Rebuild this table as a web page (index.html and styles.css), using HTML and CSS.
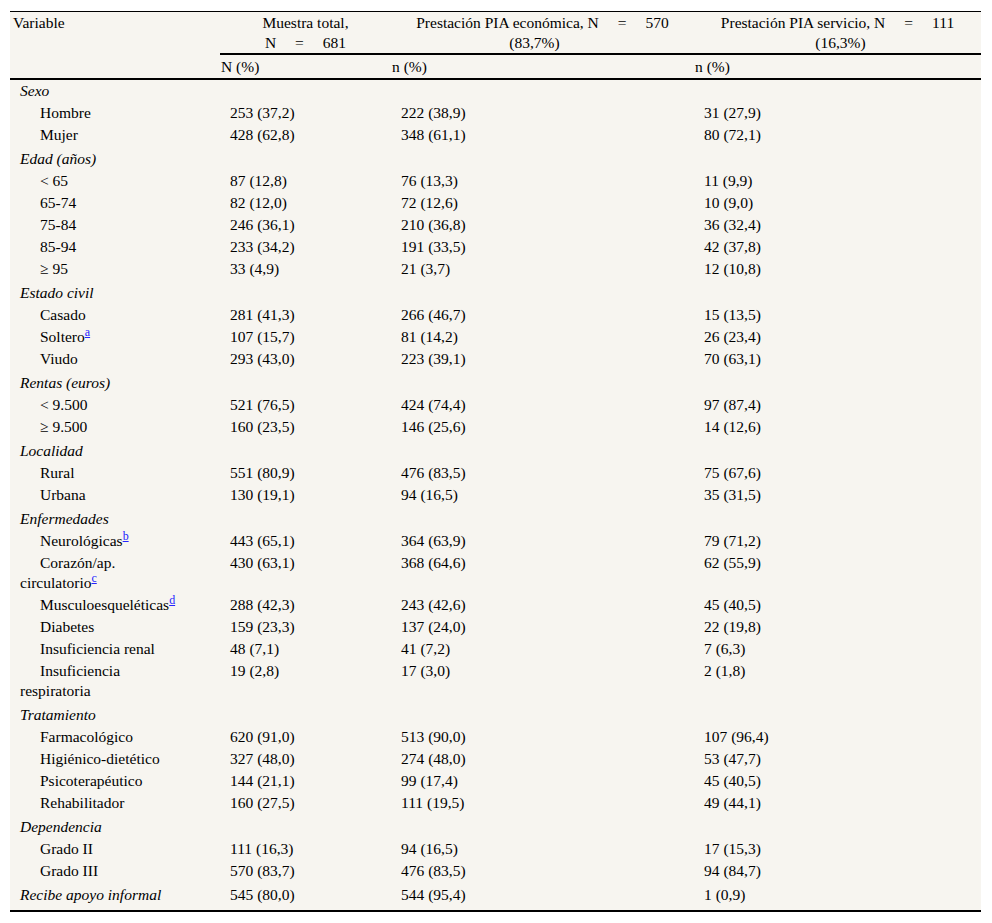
FILE: index.html
```html
<!DOCTYPE html>
<html lang="es">
<head>
<meta charset="utf-8">
<title>Tabla</title>
<link rel="stylesheet" href="styles.css">
</head>
<body>
<table class="tbl">
  <colgroup>
    <col class="c1"><col class="c2"><col class="c3"><col class="c4">
  </colgroup>
  <thead>
    <tr class="h1">
      <th rowspan="2" class="var">Variable</th>
      <th class="grp">Muestra total,<br>N<span class="eq">=</span>681</th>
      <th class="grp">Prestación PIA económica, N<span class="eq">=</span>570<br><span class="l2a">(83,7%)</span></th>
      <th class="grp">Prestación PIA servicio, N<span class="eq">=</span>111<br><span class="l2b">(16,3%)</span></th>
    </tr>
    <tr class="h2">
      <th>N (%)</th>
      <th>n (%)</th>
      <th>n (%)</th>
    </tr>
  </thead>
  <tbody>
    <tr class="cat first"><td>Sexo</td><td></td><td></td><td></td></tr>
    <tr><td class="it">Hombre</td><td>253 (37,2)</td><td>222 (38,9)</td><td>31 (27,9)</td></tr>
    <tr><td class="it">Mujer</td><td>428 (62,8)</td><td>348 (61,1)</td><td>80 (72,1)</td></tr>
    <tr class="cat"><td>Edad (años)</td><td></td><td></td><td></td></tr>
    <tr><td class="it">&lt; 65</td><td>87 (12,8)</td><td>76 (13,3)</td><td>11 (9,9)</td></tr>
    <tr><td class="it">65-74</td><td>82 (12,0)</td><td>72 (12,6)</td><td>10 (9,0)</td></tr>
    <tr><td class="it">75-84</td><td>246 (36,1)</td><td>210 (36,8)</td><td>36 (32,4)</td></tr>
    <tr><td class="it">85-94</td><td>233 (34,2)</td><td>191 (33,5)</td><td>42 (37,8)</td></tr>
    <tr><td class="it">≥ 95</td><td>33 (4,9)</td><td>21 (3,7)</td><td>12 (10,8)</td></tr>
    <tr class="cat"><td>Estado civil</td><td></td><td></td><td></td></tr>
    <tr><td class="it">Casado</td><td>281 (41,3)</td><td>266 (46,7)</td><td>15 (13,5)</td></tr>
    <tr><td class="it">Soltero<sup><a href="#a">a</a></sup></td><td>107 (15,7)</td><td>81 (14,2)</td><td>26 (23,4)</td></tr>
    <tr><td class="it">Viudo</td><td>293 (43,0)</td><td>223 (39,1)</td><td>70 (63,1)</td></tr>
    <tr class="cat"><td>Rentas (euros)</td><td></td><td></td><td></td></tr>
    <tr><td class="it">&lt; 9.500</td><td>521 (76,5)</td><td>424 (74,4)</td><td>97 (87,4)</td></tr>
    <tr><td class="it">≥ 9.500</td><td>160 (23,5)</td><td>146 (25,6)</td><td>14 (12,6)</td></tr>
    <tr class="cat"><td>Localidad</td><td></td><td></td><td></td></tr>
    <tr><td class="it">Rural</td><td>551 (80,9)</td><td>476 (83,5)</td><td>75 (67,6)</td></tr>
    <tr><td class="it">Urbana</td><td>130 (19,1)</td><td>94 (16,5)</td><td>35 (31,5)</td></tr>
    <tr class="cat"><td>Enfermedades</td><td></td><td></td><td></td></tr>
    <tr><td class="it">Neurológicas<sup><a href="#b">b</a></sup></td><td>443 (65,1)</td><td>364 (63,9)</td><td>79 (71,2)</td></tr>
    <tr><td class="it">Corazón/ap.<br>circulatorio<sup><a href="#c">c</a></sup></td><td>430 (63,1)</td><td>368 (64,6)</td><td>62 (55,9)</td></tr>
    <tr><td class="it">Musculoesqueléticas<sup><a href="#d">d</a></sup></td><td>288 (42,3)</td><td>243 (42,6)</td><td>45 (40,5)</td></tr>
    <tr><td class="it">Diabetes</td><td>159 (23,3)</td><td>137 (24,0)</td><td>22 (19,8)</td></tr>
    <tr><td class="it">Insuficiencia renal</td><td>48 (7,1)</td><td>41 (7,2)</td><td>7 (6,3)</td></tr>
    <tr><td class="it">Insuficiencia<br>respiratoria</td><td>19 (2,8)</td><td>17 (3,0)</td><td>2 (1,8)</td></tr>
    <tr class="cat"><td>Tratamiento</td><td></td><td></td><td></td></tr>
    <tr><td class="it">Farmacológico</td><td>620 (91,0)</td><td>513 (90,0)</td><td>107 (96,4)</td></tr>
    <tr><td class="it">Higiénico-dietético</td><td>327 (48,0)</td><td>274 (48,0)</td><td>53 (47,7)</td></tr>
    <tr><td class="it">Psicoterapéutico</td><td>144 (21,1)</td><td>99 (17,4)</td><td>45 (40,5)</td></tr>
    <tr><td class="it">Rehabilitador</td><td>160 (27,5)</td><td>111 (19,5)</td><td>49 (44,1)</td></tr>
    <tr class="cat"><td>Dependencia</td><td></td><td></td><td></td></tr>
    <tr><td class="it">Grado II</td><td>111 (16,3)</td><td>94 (16,5)</td><td>17 (15,3)</td></tr>
    <tr><td class="it">Grado III</td><td>570 (83,7)</td><td>476 (83,5)</td><td>94 (84,7)</td></tr>
    <tr class="cat last"><td>Recibe apoyo informal</td><td>545 (80,0)</td><td>544 (95,4)</td><td>1 (0,9)</td></tr>
  </tbody>
</table>
</body>
</html>
```

FILE: styles.css
```css
html, body {
  margin: 0;
  padding: 0;
  background: #ffffff;
}

.tbl {
  margin: 11px 0 0 10px;
  width: 971px;
  table-layout: fixed;
  border-collapse: separate;
  border-spacing: 0;
  background: #f7f5f0;
  border-top: 1px solid #000;
  font-family: "Liberation Serif", "Times New Roman", serif;
  font-size: 15.5px;
  line-height: 20px;
  color: #000;
}

.c1 { width: 210px; }
.c2 { width: 171px; }
.c3 { width: 303px; }
.c4 { width: 287px; }

.tbl th {
  font-weight: normal;
  vertical-align: top;
}

.h1 th {
  padding: 1px 2px 0 2px;
  text-align: center;
  border-bottom: 2px solid #000;
}

.h1 th.var {
  text-align: left;
  padding-left: 3px;
}

.eq {
  padding: 0 19px;
}

.l2a {
  position: relative;
  left: -8px;
}

.l2b {
  position: relative;
  left: 3px;
}

.h2 th {
  padding: 2px 2px 1px 1px;
  text-align: left;
  border-bottom: 2px solid #000;
}

.tbl td {
  padding: 1px 10px;
  vertical-align: top;
  text-align: left;
}

.cat td {
  padding-top: 3px;
}

.cat td:first-child {
  font-style: italic;
}

.cat.first td {
  padding-top: 1px;
}

.cat.last td {
  padding-bottom: 5px;
  border-bottom: 2px solid #000;
}

.it {
  text-indent: 20px;
}

sup {
  font-size: 12px;
  line-height: 0;
  vertical-align: 6px;
}

sup a {
  color: #2323ff;
  text-decoration: underline;
}
```
